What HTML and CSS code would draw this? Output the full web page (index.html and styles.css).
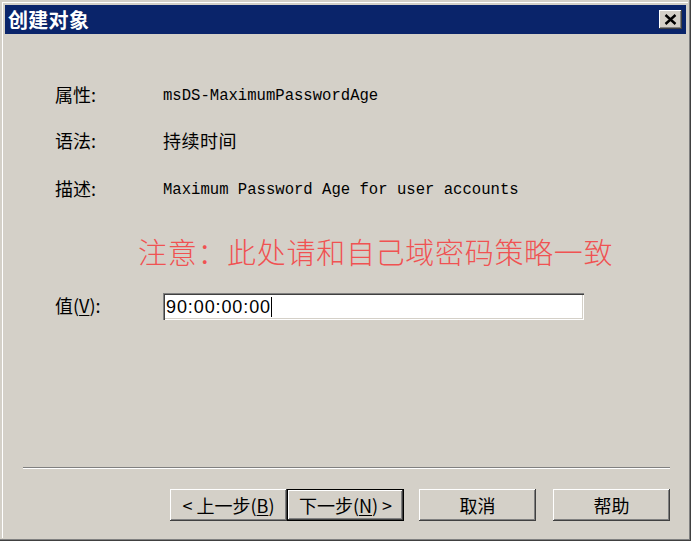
FILE: index.html
```html
<!DOCTYPE html>
<html lang="zh-CN">
<head>
<meta charset="utf-8">
<title>创建对象</title>
<link rel="stylesheet" href="styles.css">
</head>
<body>
<div class="window">
  <div class="titlebar">
    <span class="title">创建对象</span>
    <div class="close">
      <svg width="13" height="11" viewBox="0 0 13 11"><path d="M1.5 1 L11.5 10 M11.5 1 L1.5 10" stroke="#000" stroke-width="2.4" fill="none"/></svg>
    </div>
  </div>
  <div class="body">
    <div class="row"><div class="label">属性:</div><div class="mono">msDS-MaximumPasswordAge</div></div>
    <div class="row"><div class="label">语法:</div><div class="cjk">持续时间</div></div>
    <div class="row row-tall"><div class="label">描述:</div><div class="mono">Maximum Password Age for user accounts</div></div>
    <div class="note">注意：此处请和自己域密码策略一致</div>
    <div class="row value-row">
      <div class="label">值(<u>V</u>):</div>
      <div class="input"><span class="val">90:00:00:00</span><span class="caret"></span></div>
    </div>
  </div>
  <div class="footer">
    <div class="sep"></div>
    <div class="buttons">
      <div class="btn">&lt; 上一步(<u>B</u>)</div>
      <div class="btn default">下一步(<u>N</u>) &gt;</div>
      <div class="btn gap15">取消</div>
      <div class="btn gap17">帮助</div>
    </div>
  </div>
</div>
</body>
</html>
```

FILE: styles.css
```css
html, body {
  margin: 0;
  padding: 0;
  background: #d4d0c8;
}
.window {
  width: 691px;
  height: 541px;
  box-sizing: border-box;
  padding: 5px 5px 4px 5px;
  background: #d4d0c8;
  display: flex;
  flex-direction: column;
  box-shadow: inset -1px -1px #404040, inset -2px -2px #808080, inset -3px -3px #d4d0c8, inset 2px 2px #d4d0c8, inset 3px 3px #ffffff;
  font-family: "Noto Sans CJK SC", "Liberation Sans", sans-serif;
  color: #000;
}
.titlebar {
  height: 29px;
  background: #0a246a;
  display: flex;
  align-items: center;
  justify-content: space-between;
  flex-shrink: 0;
}
.title {
  color: #fff;
  font-weight: bold;
  font-size: 20px;
  line-height: 29px;
  padding-left: 3px;
  letter-spacing: 0.3px;
}
.close {
  width: 23px;
  height: 19px;
  margin-right: 4px;
  box-sizing: border-box;
  background: #d4d0c8;
  box-shadow: inset -1px -1px #404040, inset 1px 1px #ffffff, inset -2px -2px #808080;
  display: flex;
  align-items: center;
  justify-content: center;
}
.close svg { display: block; margin-top: -1px; }
.body {
  padding-top: 38px;
  padding-left: 50px;
}
.row {
  display: flex;
  align-items: center;
  height: 46px;
}
.row-tall {
  height: 48px;
  padding-top: 2px;
  box-sizing: border-box;
}
.label {
  width: 108px;
  flex-shrink: 0;
  font-size: 18px;
  line-height: 24px;
  padding-bottom: 3px;
}
.mono {
  font-family: "Liberation Mono", "DejaVu Sans Mono", monospace;
  font-size: 15.6px;
  line-height: 20px;
  padding-top: 1px;
}
.cjk {
  font-size: 18px;
  line-height: 24px;
  letter-spacing: 0.5px;
  padding-bottom: 2px;
}
.note {
  height: 78px;
  display: flex;
  align-items: center;
  padding-left: 83px;
  color: #f05252;
  font-size: 29px;
  letter-spacing: 0.7px;
  font-weight: 300;
}
.value-row {
  height: 27px;
  margin-top: 3px;
}
.input {
  width: 421px;
  height: 27px;
  box-sizing: border-box;
  background: #fff;
  box-shadow: inset 1px 1px #808080, inset 2px 2px #404040, inset -1px -1px #ffffff, inset -2px -2px #d4d0c8;
  display: flex;
  align-items: center;
  padding-left: 3px;
}
.val {
  font-family: "Liberation Sans", Arial, sans-serif;
  font-size: 18px;
  letter-spacing: 0.9px;
  line-height: 20px;
}
.caret {
  width: 1px;
  height: 20px;
  background: #000;
}
.footer {
  margin-top: auto;
  padding: 0 16px 16px 18px;
}
.sep {
  height: 1px;
  border-top: 1px solid #808080;
  background: #ffffff;
}
.buttons {
  display: flex;
  justify-content: flex-end;
  margin-top: 20px;
}
.btn {
  width: 117px;
  height: 32px;
  box-sizing: border-box;
  display: flex;
  align-items: center;
  justify-content: center;
  font-size: 18px;
  background: #d4d0c8;
  box-shadow: inset -1px -1px #404040, inset 1px 1px #ffffff, inset -2px -2px #808080;
}
.btn.default {
  box-shadow: inset 0 0 0 1px #000, inset -2px -2px #404040, inset 2px 2px #ffffff, inset -3px -3px #808080;
}
.gap15 { margin-left: 15px; }
.gap17 { margin-left: 17px; }
u { text-decoration: underline; text-underline-offset: 2px; }
```
